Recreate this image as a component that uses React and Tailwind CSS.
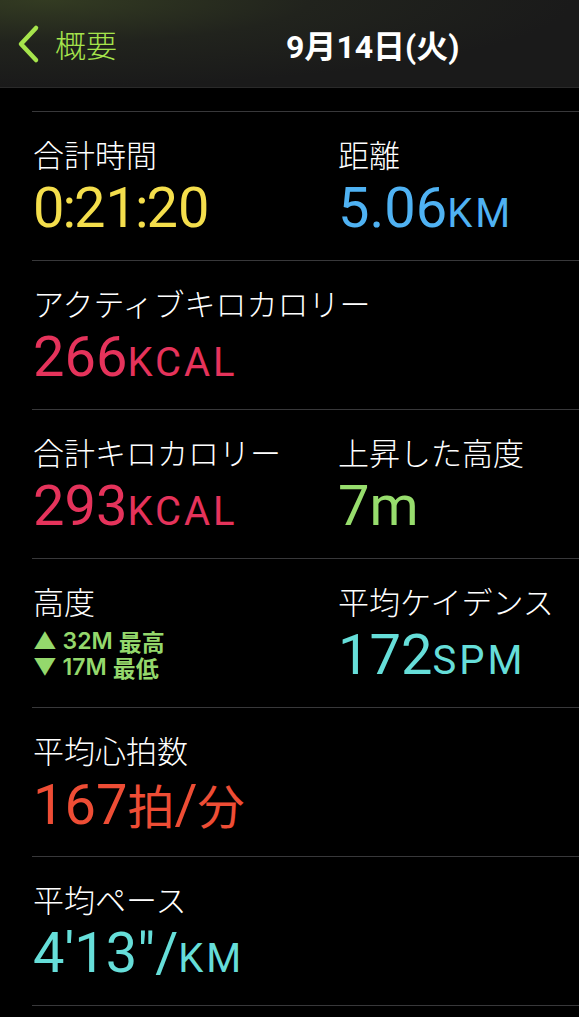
import React from 'react'

// font stacks written as Tailwind arbitrary values
const JP = "font-['Noto_Sans_CJK_JP','Noto_Sans',sans-serif]"
const NUM = "font-['Roboto','Noto_Sans_CJK_JP',sans-serif]"

function Label({ children }) {
  return <div className={`text-[31px] leading-[36px] text-white font-light ${JP}`}>{children}</div>
}

function Value({ color, children }) {
  return (
    <div className={`mt-[6px] text-[56px] leading-[60px] whitespace-nowrap ${NUM} ${color}`}>
      {children}
    </div>
  )
}

function Unit({ children }) {
  return <span className="text-[40px] tracking-[3px]">{children}</span>
}

function Row({ children }) {
  return (
    <div className="ml-8 h-[149px] border-t border-[#38383a] pt-[24px] pl-[1px] grid grid-cols-[305px_1fr]">
      {children}
    </div>
  )
}

export default function App() {
  return (
    <div className="w-[579px] h-[1017px] bg-black overflow-hidden">
      <div className="h-[88px] flex items-center relative border-b border-[#2a2a2a] bg-[radial-gradient(ellipse_at_8%_0%,#333b22_0%,#21231d_35%,#1a1a1a_70%)]">
        <div className="flex items-center pl-[16px] gap-[14px]">
          <svg width="25" height="40" viewBox="0 0 25 40" fill="none">
            <path d="M20 4 L5 20 L20 36" stroke="#a6e44c" strokeWidth="4.5" strokeLinecap="round" strokeLinejoin="round" />
          </svg>
          <span className={`text-[31px] leading-none text-[#a6e44c] font-light ${JP}`}>概要</span>
        </div>
        <div className={`absolute left-[286px] top-[25px] text-[32px] leading-[38px] font-bold text-white ${NUM}`}>
          9<span className={JP}>月</span>14<span className={JP}>日</span>(<span className={JP}>火</span>)
        </div>
      </div>

      <div className="pt-[23px]">
        <Row>
          <div>
            <Label>合計時間</Label>
            <Value color="text-[#f4de4c]">
              0<span className="-mx-[2px]">:</span>21<span className="-mx-[2px]">:</span>20
            </Value>
          </div>
          <div>
            <Label>距離</Label>
            <Value color="text-[#4fb2f3]">5.06<Unit>KM</Unit></Value>
          </div>
        </Row>
        <Row>
          <div className="col-span-2">
            <Label>アクティブキロカロリー</Label>
            <Value color="text-[#e5335b]">266<Unit>KCAL</Unit></Value>
          </div>
        </Row>
        <Row>
          <div>
            <Label>合計キロカロリー</Label>
            <Value color="text-[#e5335b]">293<Unit>KCAL</Unit></Value>
          </div>
          <div>
            <Label>上昇した高度</Label>
            <Value color="text-[#97dd6d]">7m</Value>
          </div>
        </Row>
        <Row>
          <div>
            <Label>高度</Label>
            <div className="mt-[9px] flex flex-col text-[23px] font-semibold text-[#94d86c] font-['Inter','Noto_Sans_CJK_JP',sans-serif]">
              <div className="h-[26px] leading-[26px] flex items-center gap-[6px]">
                <span className="inline-block leading-[26px]">▲ 32M</span>
                <span className={`inline-block leading-[26px] ${JP}`}>最高</span>
              </div>
              <div className="h-[26px] leading-[26px] flex items-center gap-[6px]">
                <span className="inline-block leading-[26px]">▼ 17M</span>
                <span className={`inline-block leading-[26px] ${JP}`}>最低</span>
              </div>
            </div>
          </div>
          <div>
            <Label>平均ケイデンス</Label>
            <Value color="text-[#66ded9]">172<Unit>SPM</Unit></Value>
          </div>
        </Row>
        <Row>
          <div className="col-span-2">
            <Label>平均心拍数</Label>
            <Value color="text-[#ee4d35]">
              167<span className={`text-[47px] ${JP}`}>拍</span>/<span className={`text-[47px] ${JP}`}>分</span>
            </Value>
          </div>
        </Row>
        <Row>
          <div className="col-span-2">
            <Label>平均ペース</Label>
            <Value color="text-[#66ded9]">4'13"/<Unit>KM</Unit></Value>
          </div>
        </Row>
        <div className="ml-8 border-t border-[#38383a]" />
      </div>
    </div>
  )
}
